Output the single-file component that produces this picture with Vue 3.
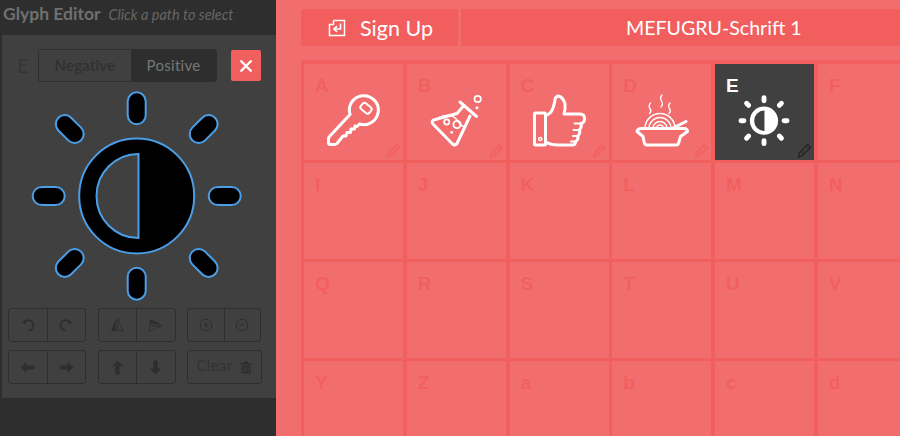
<template>
	<div class="app">
		<aside class="sidebar">
			<div class="sidebar-head">
				<h2>Glyph Editor</h2>
				<em>Click a path to select</em>
			</div>
			<div class="panel">
				<div class="panel-top">
					<span class="cur-letter">E</span>
					<div class="toggle">
						<span class="toggle-off">Negative</span>
						<span class="toggle-on">Positive</span>
					</div>
					<button class="close">
						<svg width="14" height="14" viewBox="0 0 14 14">
							<path d="M1.5 1.5l11 11M12.5 1.5l-11 11" stroke="#fff" stroke-width="2.4" />
						</svg>
					</button>
				</div>

				<svg class="big-sun" width="240" height="220" viewBox="-116.7 -111 240 220">
					<g fill="#000" stroke="#4a9fe8" stroke-width="2">
						<rect
							v-for="ray in rays"
							:key="ray.angle"
							x="-9"
							:y="-ray.dist - 16"
							width="18"
							height="32"
							rx="9"
							:transform="`rotate(${ray.angle})`"
						/>
						<circle r="57.5" />
					</g>
					<path d="M1.8 -42A42 42 0 0 0 1.8 42Z" fill="#404040" stroke="#4a9fe8" stroke-width="2" />
				</svg>

				<div class="tools">
					<div class="group">
						<button>
							<svg width="16" height="16" viewBox="0 0 16 16" fill="none" stroke="#2e2e2e" stroke-width="1.8">
								<path d="M4 5.5A5.2 5.2 0 1 1 8.5 13.5" />
								<path d="M1.5 5.5L5.8 3.2 6 7.5Z" fill="#2e2e2e" stroke="none" />
							</svg>
						</button>
						<button>
							<svg width="16" height="16" viewBox="0 0 16 16" fill="none" stroke="#2e2e2e" stroke-width="1.8">
								<path d="M12 5.5A5.2 5.2 0 1 0 7.5 13.5" />
								<path d="M14.5 5.5L10.2 3.2 10 7.5Z" fill="#2e2e2e" stroke="none" />
							</svg>
						</button>
					</div>
					<div class="group">
						<button>
							<svg width="16" height="16" viewBox="0 0 16 16">
								<path d="M7.2 1.5V14H2Z" fill="#2e2e2e" />
								<path d="M8.8 1.5V14H14Z" fill="none" stroke="#2e2e2e" stroke-width="0.9" />
							</svg>
						</button>
						<button>
							<svg width="16" height="16" viewBox="0 0 16 16">
								<path d="M1.5 7.2H14L1.5 2Z" fill="#2e2e2e" />
								<path d="M1.5 8.8H14L1.5 14Z" fill="none" stroke="#2e2e2e" stroke-width="0.9" />
							</svg>
						</button>
					</div>
					<div class="group">
						<button>
							<svg width="14" height="14" viewBox="0 0 14 14" fill="none" stroke="#2e2e2e" stroke-width="1">
								<circle cx="7" cy="7" r="5.8" />
								<path d="M4.2 7h5.6M7 4.2v5.6" />
							</svg>
						</button>
						<button>
							<svg width="14" height="14" viewBox="0 0 14 14" fill="none" stroke="#2e2e2e" stroke-width="1">
								<circle cx="7" cy="7" r="5.8" />
								<path d="M4.2 7h5.6" />
							</svg>
						</button>
					</div>
					<div class="group">
						<button>
							<svg width="15" height="13" viewBox="0 0 14 12"><path d="M0.5 6L6 1V4.2H13.5V7.8H6V11Z" fill="#2e2e2e" /></svg>
						</button>
						<button>
							<svg width="15" height="13" viewBox="0 0 14 12"><path d="M13.5 6L8 1V4.2H0.5V7.8H8V11Z" fill="#2e2e2e" /></svg>
						</button>
					</div>
					<div class="group">
						<button>
							<svg width="13" height="15" viewBox="0 0 12 14"><path d="M6 0.5L11.5 6H8V13.5H4V6H0.5Z" fill="#2e2e2e" /></svg>
						</button>
						<button>
							<svg width="13" height="15" viewBox="0 0 12 14"><path d="M6 13.5L11.5 8H8V0.5H4V8H0.5Z" fill="#2e2e2e" /></svg>
						</button>
					</div>
					<button class="clear">
						<span>Clear</span>
						<svg width="12" height="13" viewBox="0 0 12 13" fill="#2e2e2e">
							<path d="M0.5 2H4V0.5H8V2H11.5V3.5H0.5Z" />
							<path d="M1.5 4.5H10.5V12.5H1.5ZM3.3 6V11H4.3V6ZM5.5 6V11H6.5V6ZM7.7 6V11H8.7V6Z" fill-rule="evenodd" />
						</svg>
					</button>
				</div>
			</div>
		</aside>

		<main class="main">
			<div class="topbar">
				<div class="signup">
					<svg width="18" height="18" viewBox="0 0 18 18" fill="none" stroke="#fff" stroke-width="1.5">
						<path d="M5.5 1.5H16.5V16.5H1.5V5.5H5.5V1.5" />
						<path d="M12.5 4.5V10H6.5" stroke-width="1.7" />
						<path d="M9 7.2L6 10L9 12.8" stroke-width="1.7" />
					</svg>
					<span>Sign Up</span>
				</div>
				<div class="title">MEFUGRU-Schrift 1</div>
			</div>

			<div class="grid">
				<div v-for="cell in cells" :key="cell.letter" class="cell" :class="{ active: cell.icon === 'sun' }">
					<span class="letter">{{ cell.letter }}</span>

					<svg v-if="cell.icon" class="glyph" viewBox="0 0 99 96">
						<g v-if="cell.icon === 'key'" fill="none" stroke="#fff" stroke-width="3" stroke-linejoin="round">
							<path d="M46 50.5A14.5 14.5 0 1 1 55.5 60L53 62.5 51 62 50.5 65 47 65 46.5 68.5 43 68.5 42 72 39 72 33 79.5Q32 80.5 30.5 80.5H26.5Q24.5 80.5 24.5 78.5V75Q24.5 73.5 25.5 72.5Z" />
							<rect x="56.5" y="40.5" width="11" height="7.5" rx="2.5" stroke-width="2" transform="rotate(40 62 44.3)" />
						</g>

						<g v-else-if="cell.icon === 'flask'" fill="none" stroke="#fff" stroke-width="3" stroke-linejoin="round" stroke-linecap="round">
							<path d="M53 38L69.5 52.5" />
							<path d="M56 42.5L50 49.5 26.5 56Q24 57.5 26 60L45.5 80Q48 82 50 79.5L63 52" />
							<path d="M33 53Q45 49 50 56T58 63" stroke-width="1.5" />
							<circle cx="39.7" cy="58" r="2.6" stroke-width="1.7" />
							<circle cx="50" cy="60.5" r="3.6" stroke-width="1.9" />
							<circle cx="44.7" cy="68.3" r="1.4" fill="#fff" stroke="none" />
							<circle cx="70.7" cy="35" r="3.2" stroke-width="1.7" />
							<circle cx="70" cy="43.7" r="1.5" fill="#fff" stroke="none" />
						</g>

						<g v-else-if="cell.icon === 'thumb'" fill="none" stroke="#fff" stroke-width="3" stroke-linejoin="round" stroke-linecap="round">
							<rect x="24.5" y="49" width="11" height="32" rx="1" />
							<circle cx="30.3" cy="75" r="1.6" stroke-width="1.5" />
							<path d="M35.5 51.5Q41 50 43 44 44.5 40 45 35.5 46 32 48.5 32 53 33 55 40 55.5 45 54 50H70Q74.5 50 74.5 54.5 74.5 59 71 59.5 72 63 69.5 66 70.5 69.5 68 72 68.5 76 65.5 77.5 66 81 62 81H48Q41 81 35.5 78" />
							<path d="M64.5 59.5H71M63.5 66H69.5M63 72H68M61 77.5H65.5" stroke-width="2" />
						</g>

						<g v-else-if="cell.icon === 'noodle'" fill="none" stroke="#fff" stroke-width="3" stroke-linejoin="round" stroke-linecap="round">
							<path d="M25 67.5Q25.5 64.5 29.5 64.5H72Q75.5 64.5 75.5 67.5L68.5 72.5 66.5 79.5Q66 81 64 81H35Q33 81 32.5 79.5L31 72.5Z" />
							<path d="M33 64.5A15 15 0 0 1 63 64.5M37 64.5A11 11 0 0 1 59 64.5M41 64.5A7 7 0 0 1 55 64.5M44.5 64.5A3.5 3.5 0 0 1 51.5 64.5" stroke-width="1.5" />
							<path d="M61 64L74 57.5" />
							<path d="M38.5 39Q36 42 38 44.5T37.5 49.5M50 31Q47.5 34 49.5 37T49 43M58 39Q55.5 42 57.5 44.5T57 49.5" stroke-width="1.3" />
						</g>

						<g v-else transform="translate(49 56.7) scale(0.245)">
							<rect
								v-for="ray in rays"
								:key="ray.angle"
								x="-10"
								:y="-ray.dist - 16"
								width="20"
								height="32"
								rx="10"
								fill="#fff"
								:transform="`rotate(${ray.angle})`"
							/>
							<circle r="57.5" fill="#fff" />
							<path d="M1.8 -42A42 42 0 0 0 1.8 42Z" fill="#404040" />
						</g>
					</svg>

					<svg v-if="cell.icon" class="pencil" width="15" height="15" viewBox="0 0 15 15">
						<path d="M10.5 1.5L13.5 4.5 5.5 12.5 1.5 14 2.5 9.5Z" class="pencil-body" />
						<path d="M9 3.5L12 6.5M4 11L7.5 7.5" class="pencil-line" />
					</svg>
				</div>
			</div>
		</main>
	</div>
</template>

<script setup>
const rays = [
	{ angle: 0, dist: 87.7 },
	{ angle: 45, dist: 94.7 },
	{ angle: 90, dist: 88 },
	{ angle: 135, dist: 94.7 },
	{ angle: 180, dist: 87.7 },
	{ angle: 225, dist: 94.7 },
	{ angle: 270, dist: 88 },
	{ angle: 315, dist: 94.7 },
];

const icons = { A: "key", B: "flask", C: "thumb", D: "noodle", E: "sun" };

const cells = "ABCDEFIJKLMNQRSTUVYZabcd".split("").map((letter) => ({
	letter,
	icon: icons[letter],
}));
</script>

<style>
html,
body {
	margin: 0;
	overflow: hidden;
}
</style>

<style scoped>
.app {
	display: flex;
	width: 900px;
	height: 436px;
	overflow: hidden;
	background: #f26e6e;
	font-family: Lato, "Liberation Sans", sans-serif;
}

.sidebar {
	flex: 0 0 276px;
	background: #2e2e2e;
	box-sizing: border-box;
	padding-left: 2px;
	height: 436px;
}
.sidebar-head {
	display: flex;
	align-items: baseline;
	gap: 8px;
	height: 35px;
	padding: 4px 0 0 1px;
	box-sizing: border-box;
	color: #707070;
	white-space: nowrap;
}
.sidebar-head h2 {
	margin: 0;
	font-size: 17.5px;
	font-weight: 700;
	line-height: 20px;
}
.sidebar-head em {
	font-size: 14.5px;
	color: #666;
}

.panel {
	background: #404040;
	height: 363px;
	box-sizing: border-box;
	padding-top: 14px;
}
.panel-top {
	display: flex;
	align-items: center;
	height: 33px;
}
.cur-letter {
	width: 36px;
	padding-left: 15px;
	box-sizing: border-box;
	font-size: 19px;
	color: #353535;
}
.toggle {
	display: flex;
	width: 179px;
	height: 33px;
	box-sizing: border-box;
	border: 1px solid #2e2e2e;
	border-radius: 3px;
	font-size: 15px;
	line-height: 31px;
	text-align: center;
	letter-spacing: 0.3px;
}
.toggle-off {
	width: 92px;
	color: #2e2e2e;
}
.toggle-on {
	flex: 1;
	background: #2e2e2e;
	color: #777;
}
.close {
	display: flex;
	align-items: center;
	justify-content: center;
	width: 30px;
	height: 31px;
	margin-left: 14px;
	padding: 0;
	border: none;
	border-radius: 2px;
	background: #f25f5f;
}

.big-sun {
	display: block;
	margin-left: 18px;
	height: 220px;
	margin-top: 3px;
}

.tools {
	display: grid;
	grid-template-columns: 78px 78px 74px;
	column-gap: 11.5px;
	row-gap: 8px;
	margin: 3px 0 0 6px;
	grid-auto-rows: 34px;
}
.group {
	display: flex;
	box-sizing: border-box;
	border: 1px solid #2e2e2e;
	border-radius: 3px;
}
.tools button {
	display: flex;
	align-items: center;
	justify-content: center;
	padding: 0;
	background: none;
	border: none;
	font-family: inherit;
}
.group button {
	flex: 1;
}
.group button + button {
	border-left: 1px solid #2e2e2e;
}
.tools .clear {
	gap: 8px;
	width: 75px;
	border: 1px solid #2e2e2e;
	border-radius: 3px;
	box-sizing: border-box;
	font-size: 15px;
	color: #333;
	letter-spacing: 0.3px;
}
.clear span {
	position: relative;
	top: -2px;
}

.main {
	flex: 1;
	min-width: 0;
	padding: 9px 0 0 25px;
}
.topbar {
	display: flex;
	gap: 3px;
	width: 599px;
	height: 37px;
	color: #fff;
	margin-bottom: 14px;
}
.signup {
	display: flex;
	align-items: center;
	gap: 14px;
	width: 157px;
	box-sizing: border-box;
	padding-left: 27px;
	background: #f25e5e;
	border-radius: 3px 0 0 3px;
	font-size: 21.5px;
}
.title {
	flex: 1;
	padding-left: 165px;
	background: #f25e5e;
	font-size: 19.6px;
	line-height: 37px;
	white-space: nowrap;
}

.grid {
	display: grid;
	grid-template-columns: repeat(6, 99px);
	grid-auto-rows: 96px;
	column-gap: 3.75px;
	row-gap: 3px;
	width: 640px;
	padding: 4px 0 0 3px;
	background: #f25f5f;
}
.cell {
	position: relative;
	background: #f26e6e;
}
.cell.active {
	background: #404040;
}
.letter {
	position: absolute;
	left: 11px;
	top: 11px;
	font: bold 19px "Liberation Sans", sans-serif;
	color: #f25f5f;
}
.active .letter {
	color: #fff;
}
.glyph {
	position: absolute;
	left: 0;
	top: 0;
	width: 99px;
	height: 96px;
}
.pencil {
	position: absolute;
	right: 2px;
	bottom: 2px;
}
.pencil-body {
	fill: #f46a6a;
	stroke: #f25f5f;
	stroke-width: 1.3;
}
.pencil-line {
	fill: none;
	stroke: #f25f5f;
	stroke-width: 1;
}
.active .pencil-body {
	fill: #404040;
	stroke: #222;
}
.active .pencil-line {
	stroke: #222;
}
</style>
